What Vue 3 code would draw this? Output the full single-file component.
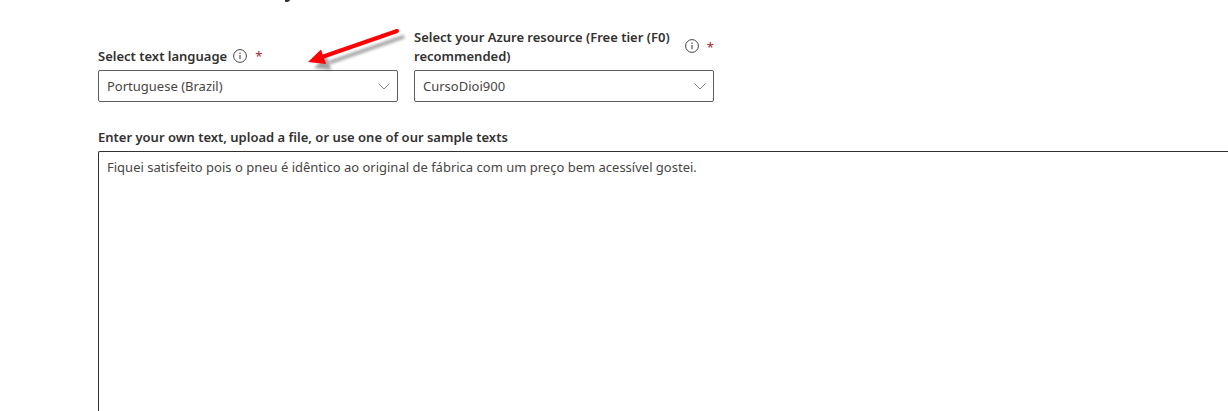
<script setup>
import { ref } from 'vue'

const fields = [
  {
    id: 'language',
    label: 'Select text language',
    options: ['Portuguese (Brazil)'],
  },
  {
    id: 'resource',
    label: 'Select your Azure resource (Free tier (F0) recommended)',
    options: ['CursoDioi900'],
  },
]

const values = ref({ language: 'Portuguese (Brazil)', resource: 'CursoDioi900' })
const text = ref(
  'Fiquei satisfeito pois o pneu é idêntico ao original de fábrica com um preço bem acessível gostei.'
)
</script>

<template>
  <main class="page">
    <svg class="heading-tail" viewBox="0 0 8 3" aria-hidden="true">
      <path d="M1 0 H6 C5.2 1.4 4.2 2 2.6 2 L1 1.8 Z" fill="#323130" />
    </svg>

    <div class="fields">
      <div v-for="field in fields" :key="field.id" class="field">
        <div class="label-row">
          <label :for="field.id">{{ field.label }}</label>
          <button class="info" type="button" aria-label="More information">
            <svg viewBox="0 0 14 14" aria-hidden="true">
              <circle cx="7" cy="7" r="6.4" fill="none" stroke="#323130" stroke-width="0.9" />
              <path d="M7 6 V10.2" stroke="#323130" stroke-width="1" />
              <circle cx="7" cy="4.2" r="0.7" fill="#323130" />
            </svg>
          </button>
          <span class="required" aria-hidden="true">*</span>
        </div>
        <div class="select-box">
          <select :id="field.id" v-model="values[field.id]" required>
            <option v-for="option in field.options" :key="option">{{ option }}</option>
          </select>
          <svg class="chevron" viewBox="0 0 12 7" aria-hidden="true">
            <path d="M0.5 0.5 L6 6 L11.5 0.5" fill="none" stroke="#797775" stroke-width="0.9" />
          </svg>
        </div>
      </div>

      <svg class="arrow" viewBox="0 0 104 50" aria-hidden="true">
        <defs>
          <filter id="arrow-blur" x="-10%" y="-20%" width="120%" height="140%">
            <feGaussianBlur stdDeviation="1.6" />
          </filter>
        </defs>
        <g transform="translate(5 6)" fill="#000" stroke="#000" opacity="0.36" filter="url(#arrow-blur)">
          <path d="M92 6 L20 31" stroke-width="3.6" stroke-linecap="round" />
          <path d="M3 37 L15.5 24.5 L20.5 39 Z" stroke="none" />
        </g>
        <path d="M91 6 L16 32" stroke="#f00" stroke-width="4" stroke-linecap="round" />
        <path d="M2 37 L15 24.5 L20 39 Z" fill="#f00" />
      </svg>
    </div>

    <label class="text-label" for="own-text">
      Enter your own text, upload a file, or use one of our sample texts
    </label>
    <textarea id="own-text" v-model="text" spellcheck="false"></textarea>
  </main>
</template>

<style>
body {
  background: #fff;
}
</style>

<style scoped>
.page {
  box-sizing: border-box;
  display: flex;
  flex-direction: column;
  height: 100vh;
  padding-left: 98px;
  overflow: hidden;
  color: #323130;
  font-family: "Segoe UI", "Noto Sans", "Open Sans", sans-serif;
  font-size: 13px;
  line-height: 19px;
}

.heading-tail {
  flex: none;
  width: 8px;
  height: 3px;
  margin: 0 0 25px 186px;
}

.fields {
  position: relative;
  display: flex;
  flex: none;
  align-items: flex-end;
  gap: 16px;
}

.field {
  width: 300px;
}

.label-row {
  display: flex;
  align-items: center;
  padding-bottom: 4px;
}

label {
  font-weight: 600;
}

.info {
  flex: none;
  width: 14px;
  height: 14px;
  margin: 0 8px 2px 6px;
  padding: 0;
  border: 0;
  background: none;
}

.info svg {
  display: block;
}

.required {
  color: #a4262c;
}

.select-box {
  position: relative;
}

select,
textarea {
  display: block;
  box-sizing: border-box;
  width: 100%;
  margin: 0;
  border: 1px solid #605e5c;
  border-radius: 2px;
  outline: 0;
  background: #fff;
  color: #484644;
  font: inherit;
}

select {
  height: 32px;
  padding: 0 28px 0 8px;
  appearance: none;
}

.chevron {
  position: absolute;
  top: 13px;
  right: 8px;
  width: 12px;
  height: 7px;
  pointer-events: none;
}

.arrow {
  position: absolute;
  top: -3px;
  left: 208px;
  width: 104px;
  height: 50px;
  pointer-events: none;
}

.text-label {
  flex: none;
  margin-top: 26px;
  padding-bottom: 4px;
}

textarea {
  flex: 1;
  min-height: 120px;
  padding: 6px 8px;
  border-color: #323130;
  border-width: 1px 0 0 1px;
  border-radius: 2px 0 0 0;
  resize: none;
}
</style>
